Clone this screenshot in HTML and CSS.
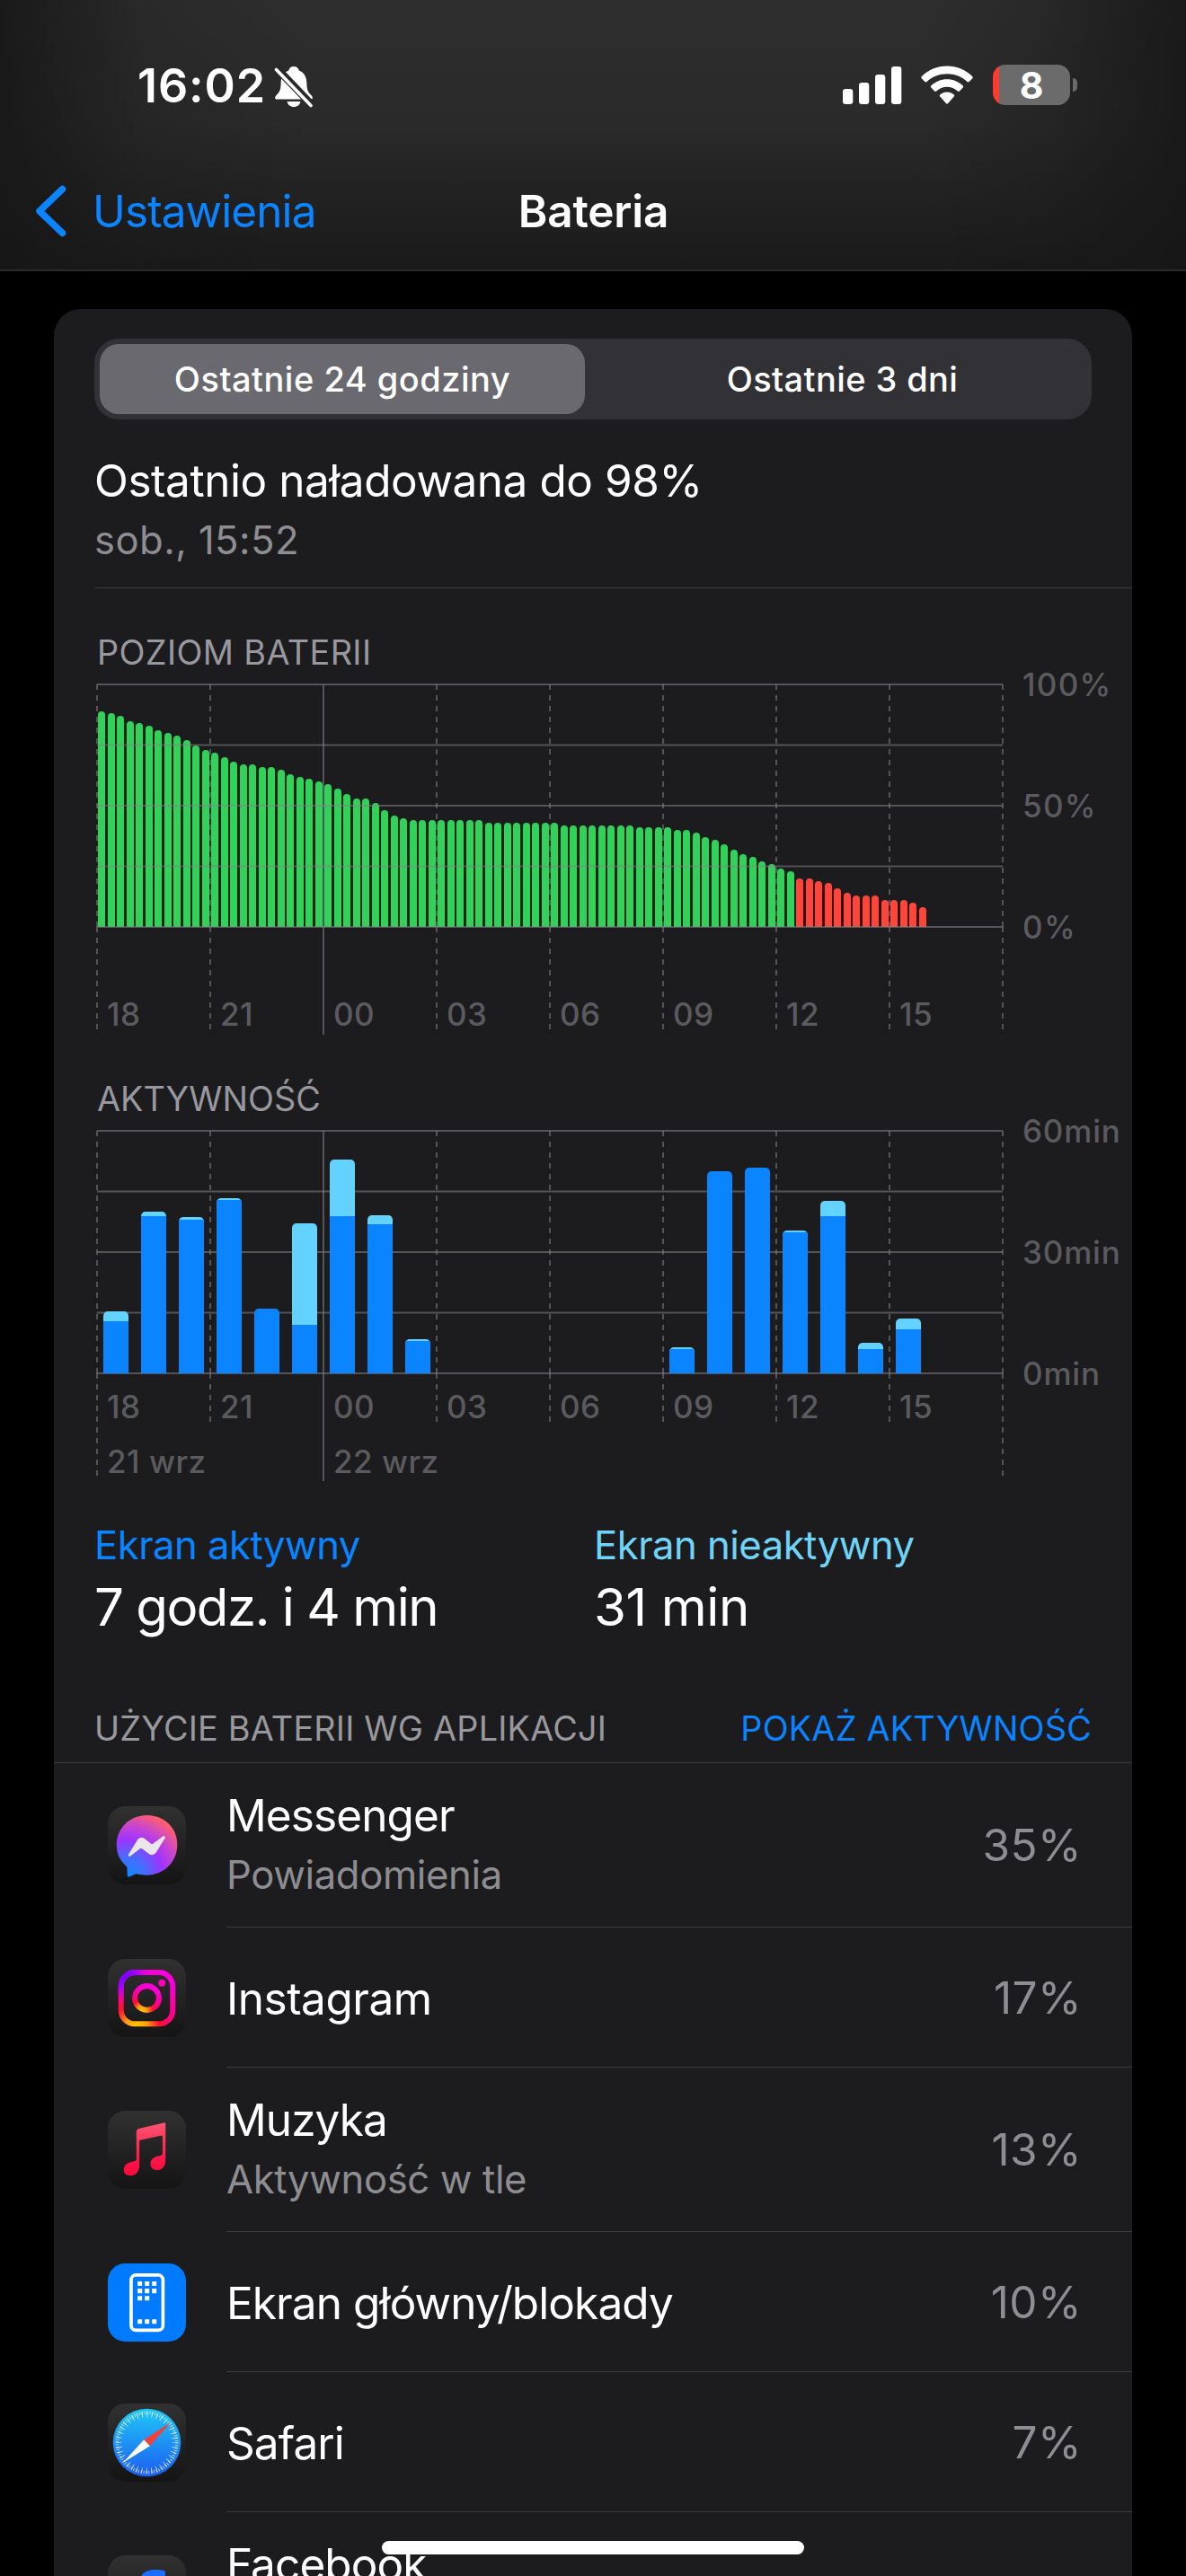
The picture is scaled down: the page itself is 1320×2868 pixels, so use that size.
FILE: index.html
```html
<!DOCTYPE html>
<html lang="pl">
<head>
<meta charset="utf-8">
<title>Bateria</title>
<link rel="stylesheet" href="styles.css">
</head>
<body>
<header class="top">
  <div class="status">
    <div class="status-left">
      <span class="time">16:02</span>
      <svg class="bell" width="44" height="48" viewBox="0 0 44 48">
        <path d="M22 1c-3.200 0-5.300 2-5.700 4.600C10 8 7.700 13 7.600 20c-.1 7-1.400 9.500-5 13-1.800 1.800-2.200 4.500.4 4.500h38c2.600 0 2.200-2.700.4-4.500-3.600-3.500-4.900-6-5-13-.1-7-2.400-12-8.700-14.400C27.300 3 25.200 1 22 1z" fill="#fff"/>
        <path d="M14.500 40h15c-.8 3.800-3.600 6-7.500 6s-6.700-2.200-7.500-6z" fill="#fff"/>
        <path d="M4.500 1.500 44 43" stroke="#292929" stroke-width="4.500"/>
        <path d="M2.500 4.500 41 44.500" stroke="#292929" stroke-width="6"/>
        <path d="M2.500 4.500 41 44.500" stroke="#fff" stroke-width="3.600" stroke-linecap="round"/>
      </svg>
    </div>
    <div class="status-right">
      <svg width="66" height="42" viewBox="0 0 66 42" fill="#fff">
        <rect y="25" width="11.300" height="17" rx="3.200"/><rect x="18" y="18" width="11.300" height="24" rx="3.200"/><rect x="36" y="9" width="11.300" height="33" rx="3.200"/><rect x="54" y="0" width="11.300" height="42" rx="3.200"/>
      </svg>
      <svg class="wifi" width="58" height="43" viewBox="0 0 58 43" fill="#fff">
        <path d="M29 .5C18 .5 8 4.900.7 12.200c-.6.6-.6 1.500 0 2.100l3.700 3.800c.6.600 1.500.6 2.100 0C12.400 12.300 20.300 9.200 29 9.200s16.600 3.100 22.500 8.900c.6.6 1.500.6 2.100 0l3.700-3.800c.6-.6.6-1.500 0-2.100C50 4.900 40 .5 29 .5z"/>
        <path d="M29 15.300c-6.900 0-13.100 2.700-17.700 7.100-.6.600-.6 1.500 0 2.100l3.800 3.900c.6.6 1.500.6 2.100 0 3.100-2.900 7.200-4.600 11.800-4.600s8.700 1.700 11.800 4.600c.6.6 1.500.6 2.100 0l3.800-3.900c.6-.6.6-1.500 0-2.100-4.600-4.400-10.800-7.100-17.700-7.100z"/>
        <path d="M29 29.500c-3 0-5.700 1.100-7.800 3-.6.6-.6 1.500 0 2.100l6.700 7.400c.6.7 1.600.7 2.200 0l6.700-7.400c.6-.6.6-1.500 0-2.100-2.100-1.900-4.800-3-7.800-3z"/>
      </svg>
      <div class="battery"><span>8</span></div>
      <i class="battery-cap"></i>
    </div>
  </div>
  <nav class="nav">
    <a class="back">
      <svg width="36" height="58" viewBox="0 0 36 58" fill="none" stroke="#0a84ff" stroke-width="7.500" stroke-linecap="round" stroke-linejoin="round"><path d="M30.500 4.500 5 29l25.500 24.500"/></svg>
      <span>Ustawienia</span>
    </a>
    <h1>Bateria</h1>
  </nav>
</header>

<main class="card">
  <div class="segmented">
    <span class="segment on">Ostatnie 24 godziny</span>
    <span class="segment">Ostatnie 3 dni</span>
  </div>
  <section class="charged">
    <h2>Ostatnio naładowana do 98%</h2>
    <p>sob., 15:52</p>
  </section>

  <section class="chart level">
    <h3>POZIOM BATERII</h3>
    <div class="body">
      <div class="plot">
        <div class="bars" id="level-bars"></div>
        <svg class="grid" id="level-grid" width="1012" height="394" viewBox="-2 -2 1012 394"></svg>
      </div>
      <div class="scale"><span>100%</span><span>50%</span><span>0%</span></div>
    </div>
    <div class="hours"><span>18</span><span>21</span><span>00</span><span>03</span><span>06</span><span>09</span><span>12</span><span>15</span></div>
  </section>

  <section class="chart activity">
    <h3>AKTYWNOŚĆ</h3>
    <div class="body">
      <div class="plot">
        <svg class="grid" id="activity-grid" width="1012" height="394" viewBox="-2 -2 1012 394"></svg>
        <div class="bars" id="activity-bars"></div>
      </div>
      <div class="scale"><span>60min</span><span>30min</span><span>0min</span></div>
    </div>
    <div class="hours"><span>18</span><span>21</span><span>00</span><span>03</span><span>06</span><span>09</span><span>12</span><span>15</span></div>
    <div class="hours days"><span>21 wrz</span><span></span><span>22 wrz</span></div>
  </section>

  <section class="summary">
    <div><p class="on-label">Ekran aktywny</p><p class="value long">7 godz. i 4 min</p></div>
    <div><p class="off-label">Ekran nieaktywny</p><p class="value">31 min</p></div>
  </section>

  <div class="usage-head"><span>UŻYCIE BATERII WG APLIKACJI</span><a>POKAŻ AKTYWNOŚĆ</a></div>

  <ul class="apps">
    <li class="app tall">
      <svg class="icon" viewBox="0 0 260 260">
        <defs>
          <linearGradient id="dark" x2="0" y2="1"><stop stop-color="#313131"/><stop offset="1" stop-color="#141414"/></linearGradient>
          <radialGradient id="msg" cx=".18" cy=".98" r="1.080"><stop stop-color="#0a8bff"/><stop offset=".28" stop-color="#4a6bff"/><stop offset=".55" stop-color="#a033ff"/><stop offset=".75" stop-color="#c845d0"/><stop offset=".98" stop-color="#ff5f6f"/></radialGradient>
          <radialGradient id="insta" cx=".3" cy="1.050" r="1.050"><stop stop-color="#ffc800"/><stop offset=".2" stop-color="#ff9a10"/><stop offset=".42" stop-color="#ff1030"/><stop offset=".65" stop-color="#ff0082"/><stop offset="1" stop-color="#f800d8"/></radialGradient>
          <radialGradient id="violet" cx=".02" cy=".02" r=".6"><stop stop-color="#6a00ff"/><stop offset=".4" stop-color="#9a00ff"/><stop offset="1" stop-color="#f800e0" stop-opacity="0"/></radialGradient>
          <linearGradient id="note" gradientUnits="userSpaceOnUse" x1="0" y1="40" x2="0" y2="216"><stop stop-color="#fb5571"/><stop offset=".75" stop-color="#fc1245"/><stop offset="1" stop-color="#fb0a3c"/></linearGradient>
          <linearGradient id="sky" x2="0" y2="1"><stop stop-color="#20c8f8"/><stop offset="1" stop-color="#1c5cf0"/></linearGradient>
        </defs>
        <rect width="260" height="260" rx="58" fill="url(#dark)"/>
        <path d="M130 30C73 30 29 73 29 128c0 31 12 53 33 72 1 1 2 3 2 5l1 25c0 4 4 6 8 4l19-8c2-1 4-1 6 0 10 2 20 3 32 3 57 0 101-44 101-101S187 30 130 30z" fill="url(#msg)"/>
        <path d="m69 160 30-49c5-8 15-10 22-4l23 18c3 1 5 1 7-1l32-24c5-4 10 1 7 6l-30 49c-5 7-15 9-22 4l-24-18c-2-1-5-1-7 0l-31 24c-5 4-10-1-7-5z" fill="#e9e6ee"/>
      </svg>
      <div class="label"><p class="name">Messenger</p><p class="note">Powiadomienia</p></div><span class="share">35%</span>
    </li>
    <li class="app">
      <svg class="icon" viewBox="0 0 260 260">
        <rect width="260" height="260" rx="58" fill="url(#dark)"/>
        <g fill="none" stroke="url(#insta)" stroke-width="18"><rect x="44" y="45" width="172" height="171" rx="46"/><circle cx="130" cy="130" r="40"/></g>
        <rect x="44" y="45" width="172" height="171" rx="46" fill="none" stroke="url(#violet)" stroke-width="18"/>
        <circle cx="180" cy="80" r="12" fill="#fb00b4"/>
      </svg>
      <div class="label"><p class="name loose">Instagram</p></div><span class="share">17%</span>
    </li>
    <li class="app tall">
      <svg class="icon" viewBox="0 0 260 260">
        <rect width="260" height="260" rx="58" fill="url(#dark)"/>
        <path d="M102 60q-7 2-7 10v89c0 7-3 9-10 10l-9 2c-14 3-23 13-23 25 0 13 10 21 24 20 17-2 28-15 28-34V105c0-5 1-7 6-8l65-14c4-1 6 0 6 4v53c0 7-3 9-9 10l-9 2c-13 3-22 12-22 24 0 14 10 22 24 21 17-2 26-14 26-33V45c0-4-3-6-7-5z" fill="url(#note)"/>
      </svg>
      <div class="label"><p class="name">Muzyka</p><p class="note">Aktywność w tle</p></div><span class="share">13%</span>
    </li>
    <li class="app">
      <svg class="icon" viewBox="0 0 260 260">
        <rect width="260" height="260" rx="58" fill="#007aff"/>
        <rect x="77.500" y="38.500" width="106" height="184" rx="16" fill="none" stroke="#fff" stroke-width="11"/>
        <path d="M99 60h15v15H99zM123 60h15v15h-15zM147 60h15v15h-15zM99 84h15v15H99zM123 84h15v15h-15zM147 84h15v15h-15zM99 108h15v15H99zM123 108h15v15h-15zM99 186h15v15H99zM123 186h15v15h-15zM147 186h15v15h-15z" fill="#fff"/>
      </svg>
      <div class="label"><p class="name">Ekran główny/blokady</p></div><span class="share">10%</span>
    </li>
    <li class="app">
      <svg class="icon" viewBox="0 0 260 260">
        <rect width="260" height="260" rx="58" fill="url(#dark)"/>
        <circle cx="130" cy="130" r="113" fill="url(#sky)"/>
        <circle cx="130" cy="130" r="99" fill="none" stroke="#fff" stroke-opacity=".75" stroke-width="11" stroke-dasharray="2.600 6.040"/>
        <circle cx="130" cy="130" r="94" fill="none" stroke="#fff" stroke-opacity=".75" stroke-width="20" stroke-dasharray="2.600 13.807" stroke-dashoffset="1.300"/>
        <path d="m210 63-90 57 20 21z" fill="#f0423a"/>
        <path d="m50 197 70-77 20 21z" fill="#fff"/>
      </svg>
      <div class="label"><p class="name">Safari</p></div><span class="share">7%</span>
    </li>
    <li class="app tall">
      <svg class="icon" viewBox="0 0 260 260">
        <rect width="260" height="260" rx="58" fill="url(#dark)"/>
        <path d="M191 52c-10-3-22-4-34-4-36 0-53 18-53 52v20H80v38h24v102h44V158h34l7-38h-41v-14c0-14 7-20 24-20h19z" fill="#1a6dff"/>
      </svg>
      <div class="label"><p class="name">Facebook</p></div>
    </li>
  </ul>
</main>
<div class="home-indicator"></div>
<script src="charts.js"></script>
</body>
</html>
```

FILE: styles.css
```css
* { box-sizing: border-box; margin: 0; padding: 0; }
html, body { height: 2868px; overflow: hidden; }
body { background: #000; color: #fff; font-family: Inter, "Liberation Sans", sans-serif; font-weight: 400; }
h1, h2, h3 { font-weight: 400; }
svg { display: block; flex: none; }

.top {
  height: 302px;
  border-bottom: 2px solid #2a2a2b;
  background:
    linear-gradient(90deg, rgba(22,22,22,.85), rgba(22,22,22,.2) 12%, transparent 26%, transparent 78%, rgba(22,22,22,.25) 88%, rgba(22,22,22,.85)),
    linear-gradient(#2e2e2f, #2a2a2a 45%, #1a1a1a);
}
.status { display: flex; justify-content: space-between; height: 194px; padding: 66px 121px 0 153px; }
.status-left { display: flex; }
.time { width: 152px; font-size: 52px; font-weight: 600; line-height: 60px; letter-spacing: .9px; }
.bell { margin-top: 7px; }
.status-right { display: flex; align-items: flex-start; }
.status-right > svg { margin-top: 8px; }
.status-right > .wifi { margin: 7px 22px 0 21px; }
.battery {
  width: 86px; height: 45px; margin-top: 6px; border-radius: 14px;
  background: linear-gradient(90deg, #ff3b30 7px, #6b6b6b 7px);
  font-size: 41px; font-weight: 700; line-height: 46px; text-align: center;
}
.battery-cap { width: 5px; height: 15px; margin: 15px 0 0 3px; align-self: flex-start; margin-top: 21px; border-radius: 0 5px 5px 0; background: #6b6b6b; }

.nav { display: grid; grid-template-columns: 1fr auto 1fr; padding: 11px 39px 0 40px; font-size: 49.5px; line-height: 60px; }
.back { display: flex; color: #0a84ff; letter-spacing: -.9px; }
.back svg { margin: 1px 28px 0 -1px; }
.nav h1 { font-size: inherit; font-weight: 600; letter-spacing: -.2px; }

.card { height: 2560px; margin: 42px 60px 0; padding-top: 33px; border-radius: 30px 30px 0 0; background: #1c1c1e; }
.segmented { display: flex; gap: 15px; height: 90px; margin: 0 45px; padding: 6px; border-radius: 27px; background: #313136; }
.segment { flex: 1; font-size: 38px; font-weight: 500; line-height: 78px; letter-spacing: .4px; text-align: center; }
.segment.on { flex: 0 0 540px; border-radius: 21px; background: #6a696f; letter-spacing: .5px; }

.charged { margin-left: 45px; padding: 38px 0 26px; border-bottom: 1px solid #3b3b3e; }
.charged h2 { font-size: 49.5px; line-height: 60px; letter-spacing: -.45px; }
.charged p { margin: 10px 0 -1px; font-size: 43.6px; line-height: 54px; letter-spacing: .45px; color: #8d8d92; }

.chart { margin-left: 48px; }
.chart h3 { font-size: 37.8px; line-height: 48px; letter-spacing: .39px; color: #98989e; }
.chart.level { padding-top: 47px; }
.chart.activity { padding-top: 48px; }
.chart.activity h3 { letter-spacing: 0; }
.body { display: flex; height: 270px; margin-top: 12px; }
.plot { position: relative; width: 1008px; }
.grid { position: absolute; left: -2px; top: -2px; }
.grid line { stroke: rgba(132,132,137,.55); stroke-width: 2; }
.grid .dashed { stroke-dasharray: 6 6; }
.bars { display: flex; align-items: flex-end; height: 270px; }
.level .bars { padding-left: 1.3px; }
.slot {
  width: 10.5px; padding-right: 2.5px;
  background: linear-gradient(#05290f, #05290f) no-repeat bottom / 100% calc(100% - 5px);
}
.slot b { display: block; height: 100%; border-radius: 4px 4px 0 0; background: #34d05c; }
.slot.low { background-image: linear-gradient(#3a0b08, #3a0b08); }
.slot.low b { background: #fb463c; }
.slot:last-child { background: none; }
.activity .bars { position: relative; }
.hour { width: 28px; margin: 0 7px; border-radius: 5px 5px 1px 1px; overflow: hidden; background: #64d2ff; display: flex; align-items: flex-end; }
.hour b { width: 100%; background: #0a84ff; }
.scale {
  display: flex; flex-direction: column; justify-content: space-between;
  margin: -22px 0 -22px 22px; font-size: 35px; font-weight: 500; line-height: 44px; letter-spacing: .8px; color: #5b5b5f;
}
.level .scale { letter-spacing: 1.3px; }
.hours {
  display: grid; grid-template-columns: repeat(8, 126px); height: 44px;
  font-size: 35px; font-weight: 500; line-height: 44px; letter-spacing: .5px; color: #5b5b5f;
}
.hours span { padding-left: 11px; white-space: nowrap; }
.level .hours { margin-top: 75px; }
.activity .hours { margin-top: 15px; }
.activity .days { margin-top: 17px; }

.summary { display: grid; grid-template-columns: 556px 1fr; margin: 45px 45px 0; font-size: 43.6px; line-height: 54px; letter-spacing: -.5px; }
.on-label { color: #0a84ff; }
.off-label { color: #70d4f8; }
.value { margin-top: 6px; font-size: 58.2px; line-height: 70px; letter-spacing: -.4px; }
.value.long { letter-spacing: -1.5px; }

.usage-head {
  display: flex; justify-content: space-between; margin-top: 76px; padding: 0 45px 14px 45px;
  border-bottom: 1px solid #3b3b3e; font-size: 37.8px; line-height: 48px; letter-spacing: .2px; color: #98989e;
}
.usage-head a { color: #0a84ff; }

.apps { list-style: none; }
.app { display: flex; align-items: center; height: 156px; padding-left: 60px; }
.app.tall { height: 183px; }
.icon { width: 87px; height: 87px; margin-right: 45px; }
.label, .share { height: 100%; display: flex; flex-direction: column; justify-content: center; border-bottom: 1px solid #3b3b3e; }
.label { flex: 1; padding-top: 2px; }
.tall .label { padding: 0 0 3px; }
.app:last-child .label { justify-content: flex-start; padding-top: 28px; }
.name { font-size: 49.5px; line-height: 60px; letter-spacing: -.9px; }
.name.loose { letter-spacing: -.5px; }
.note { margin-top: 10px; margin-bottom: -1px; font-size: 43.6px; line-height: 54px; letter-spacing: -.36px; color: #8d8d92; }
.share { padding-right: 56px; font-size: 49.5px; color: #8d8d92; letter-spacing: .4px; }

.home-indicator { position: absolute; left: 425px; top: 2829px; width: 470px; height: 15px; border-radius: 8px; background: #fff; }
```

FILE: charts.js
```js
// Battery level in percent, one reading per 15 minutes starting at 18:00.
const level = [89,88,87,85,84,83,81,80,79,77,75,73,72,70,68,67,67,66,66,65,63,62,61,60,59,57,55,53,53,51,48,46,45,
  44,44,44,44,44,44,44,44,43,43,43,43,43,43,43,43,42,42,42,42,42,42,42,42,41,41,41,41,40,40,39,37,36,34,32,30,29,27,26,24,23,
  20,20,19,18,16,14,13,13,13,11,11,11,10,8];
document.getElementById('level-bars').innerHTML = level
  .map(v => `<div class="slot${v <= 20 ? ' low' : ''}" style="height:${v}%"><b></b></div>`).join('');

// Minutes per hour: [total, screen on].
const activity = [[15.3,12.9],[40,38.9],[38.7,38],[43.3,42.9],[16,16],[37.1,12],[52.9,38.9],[39.1,36.9],[8.4,8],
  [0,0],[0,0],[0,0],[0,0],[0,0],[0,0],[6.4,6],[50,50],[50.9,50.9],[35.3,34.9],[42.7,38.9],[7.5,6],[13.5,10.9]];
document.getElementById('activity-bars').innerHTML = activity
  .map(([t, a]) => `<div class="hour" style="height:${t / 60 * 100}%"><b style="height:${t ? a / t * 100 : 0}%"></b></div>`).join('');

// Horizontal quarter lines and a vertical line every three hours; midnight is solid.
// Dashes restart at the baseline, so each vertical is drawn in two parts.
function grid(id, ends) {
  let s = '';
  for (let i = 0; i < 5; i++) s += `<line x1="0" x2="1008" y1="${i * 67.5}" y2="${i * 67.5}"/>`;
  ends.forEach((end, i) => {
    const line = (a, b) => `<line ${i === 2 ? '' : 'class="dashed"'} x1="${i * 126}" x2="${i * 126}" y1="${a}" y2="${b}"/>`;
    s += line(0, 270) + line(270, end);
  });
  document.getElementById(id).innerHTML = s;
}
grid('level-grid', [384, 384, 390, 384, 384, 384, 384, 384, 384]);
grid('activity-grid', [384, 324, 390, 324, 324, 324, 324, 324, 384]);
```
